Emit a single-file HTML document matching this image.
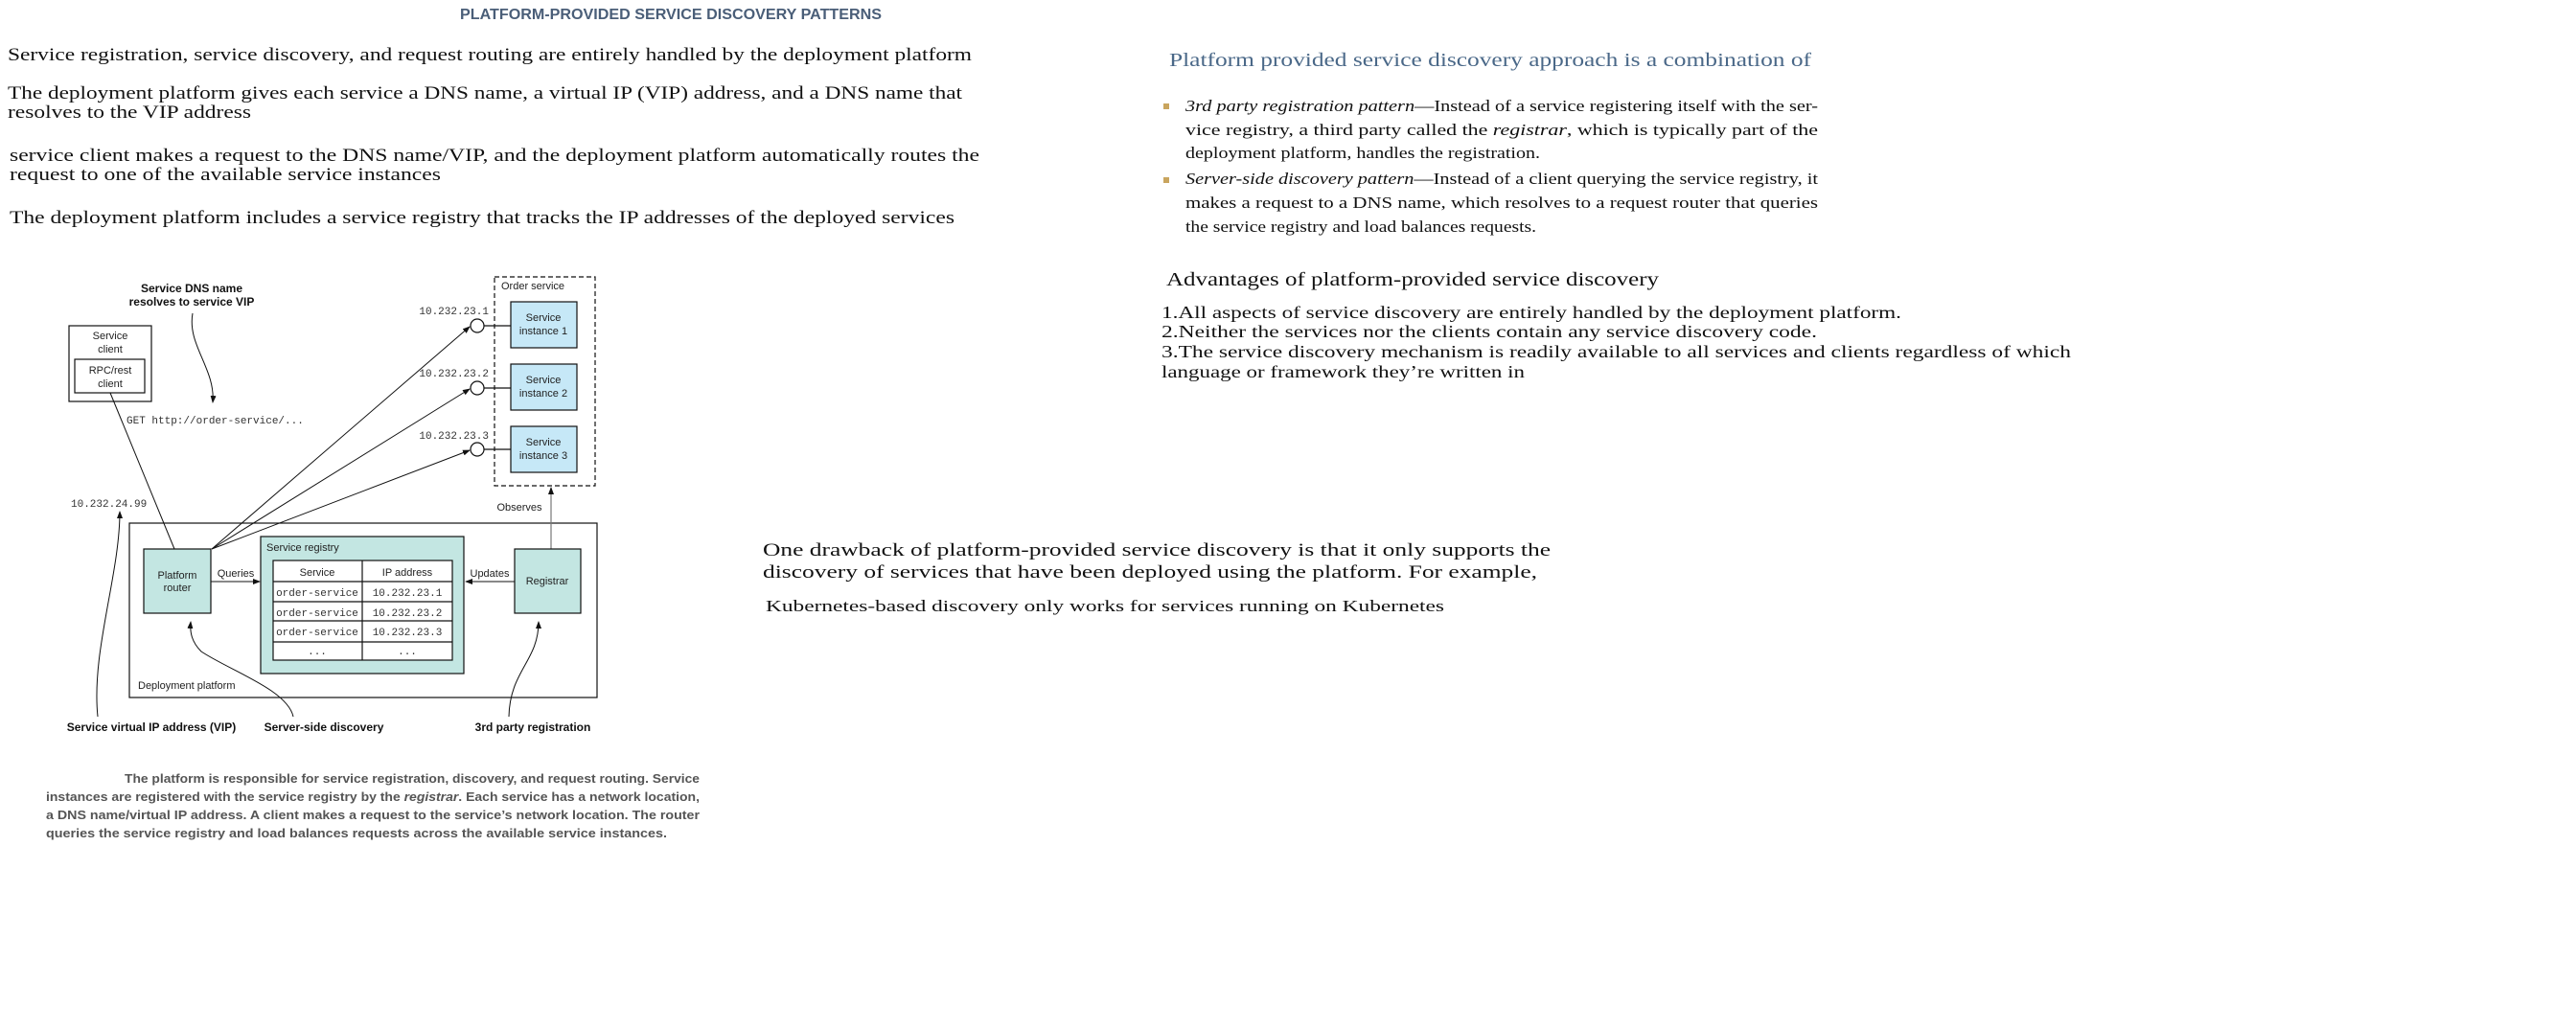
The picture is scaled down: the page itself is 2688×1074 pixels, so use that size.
<!DOCTYPE html>
<html><head><meta charset="utf-8"><style>
html,body{margin:0;padding:0;background:#fff;width:2688px;height:1074px;overflow:hidden}
svg{display:block}
.s{font-family:"Liberation Serif",serif;fill:#111}
.a{font-family:"Liberation Sans",sans-serif;fill:#222;font-size:11px}
.m{font-family:"Liberation Mono",monospace;fill:#333;font-size:11px}
.b{font-family:"Liberation Sans",sans-serif;font-weight:bold;fill:#111;font-size:12px}
</style></head><body>
<svg width="2688" height="1074" viewBox="0 0 2688 1074" xmlns="http://www.w3.org/2000/svg">
<defs><marker id="ar" markerWidth="8" markerHeight="6" refX="7" refY="3" orient="auto" markerUnits="userSpaceOnUse"><path d="M0,0 L8,3 L0,6 z" fill="#111"/></marker></defs>

<text x="480" y="20" font-family="Liberation Sans,sans-serif" font-weight="bold" font-size="16" fill="#4a5e78" textLength="440" lengthAdjust="spacingAndGlyphs">PLATFORM-PROVIDED SERVICE DISCOVERY PATTERNS</text>

<text class="s" x="8" y="63" font-size="19" textLength="1006" lengthAdjust="spacingAndGlyphs">Service registration, service discovery, and request routing are entirely handled by the deployment platform</text>
<text class="s" x="8" y="103" font-size="19" textLength="996" lengthAdjust="spacingAndGlyphs">The deployment platform gives each service a DNS name, a virtual IP (VIP) address, and a DNS name that</text>
<text class="s" x="8" y="123" font-size="19" textLength="254" lengthAdjust="spacingAndGlyphs">resolves to the VIP address</text>
<text class="s" x="10" y="168" font-size="19" textLength="1012" lengthAdjust="spacingAndGlyphs">service client makes a request to the DNS name/VIP, and the deployment platform automatically routes the</text>
<text class="s" x="10" y="188" font-size="19" textLength="450" lengthAdjust="spacingAndGlyphs">request to one of the available service instances</text>
<text class="s" x="10" y="233" font-size="19" textLength="986" lengthAdjust="spacingAndGlyphs">The deployment platform includes a service registry that tracks the IP addresses of the deployed services</text>

<!-- diagram -->
<text class="b" x="200" y="305" text-anchor="middle">Service DNS name</text>
<text class="b" x="200" y="319" text-anchor="middle">resolves to service VIP</text>
<path d="M201,327 C195,360 225,385 222,420" fill="none" stroke="#111" stroke-width="1" marker-end="url(#ar)"/>

<rect x="72" y="340" width="86" height="79" fill="#fff" stroke="#111" stroke-width="1.2"/>
<text class="a" x="115" y="354" text-anchor="middle">Service</text>
<text class="a" x="115" y="368" text-anchor="middle">client</text>
<rect x="78" y="375" width="73" height="35" fill="#fff" stroke="#111" stroke-width="1.2"/>
<text class="a" x="115" y="390" text-anchor="middle">RPC/rest</text>
<text class="a" x="115" y="404" text-anchor="middle">client</text>
<text class="m" x="132" y="442">GET http://order-service/...</text>

<text class="m" x="74" y="529">10.232.24.99</text>
<path d="M102,748 C95,680 125,600 125,534" fill="none" stroke="#111" stroke-width="1" marker-end="url(#ar)"/>

<rect x="516" y="289" width="105" height="218" fill="none" stroke="#111" stroke-width="1.2" stroke-dasharray="5,3"/>
<text class="a" x="523" y="302">Order service</text>
<g fill="#c6e8f7" stroke="#111" stroke-width="1.2">
<rect x="533" y="315" width="69" height="48"/>
<rect x="533" y="380" width="69" height="48"/>
<rect x="533" y="445" width="69" height="48"/>
</g>
<text class="a" x="567" y="335" text-anchor="middle">Service</text><text class="a" x="567" y="349" text-anchor="middle">instance 1</text>
<text class="a" x="567" y="400" text-anchor="middle">Service</text><text class="a" x="567" y="414" text-anchor="middle">instance 2</text>
<text class="a" x="567" y="465" text-anchor="middle">Service</text><text class="a" x="567" y="479" text-anchor="middle">instance 3</text>
<g stroke="#111" stroke-width="1.2" fill="#fff">
<line x1="505" y1="340" x2="533" y2="340"/><circle cx="498" cy="340" r="7"/>
<line x1="505" y1="405" x2="533" y2="405"/><circle cx="498" cy="405" r="7"/>
<line x1="505" y1="469" x2="533" y2="469"/><circle cx="498" cy="469" r="7"/>
</g>
<text class="m" x="510" y="328" text-anchor="end">10.232.23.1</text>
<text class="m" x="510" y="393" text-anchor="end">10.232.23.2</text>
<text class="m" x="510" y="458" text-anchor="end">10.232.23.3</text>

<rect x="135" y="546" width="488" height="182" fill="#fff" stroke="#111" stroke-width="1.2"/>
<line x1="575" y1="573" x2="575" y2="509" stroke="#777" stroke-width="1.2" marker-end="url(#ar)"/>
<text class="a" x="542" y="533" text-anchor="middle">Observes</text>
<g stroke="#111" stroke-width="1" fill="none">
<line x1="221" y1="573" x2="490" y2="341" marker-end="url(#ar)"/>
<line x1="221" y1="573" x2="490" y2="406" marker-end="url(#ar)"/>
<line x1="221" y1="573" x2="490" y2="470" marker-end="url(#ar)"/>
<line x1="115" y1="410" x2="182" y2="573"/>
</g>
<rect x="150" y="573" width="70" height="67" fill="#c3e6e2" stroke="#111" stroke-width="1.2"/>
<text class="a" x="185" y="604" text-anchor="middle">Platform</text>
<text class="a" x="185" y="617" text-anchor="middle">router</text>
<rect x="272" y="560" width="212" height="143" fill="#c3e6e2" stroke="#111" stroke-width="1.2"/>
<text class="a" x="278" y="575">Service registry</text>
<rect x="285" y="585" width="187" height="104" fill="#fff" stroke="#111" stroke-width="1.2"/>
<g stroke="#111" stroke-width="1.2">
<line x1="378" y1="585" x2="378" y2="689"/>
<line x1="285" y1="607" x2="472" y2="607"/>
<line x1="285" y1="628" x2="472" y2="628"/>
<line x1="285" y1="648" x2="472" y2="648"/>
<line x1="285" y1="670" x2="472" y2="670"/>
</g>
<text class="a" x="331" y="601" text-anchor="middle">Service</text>
<text class="a" x="425" y="601" text-anchor="middle">IP address</text>
<text class="m" x="331" y="622" text-anchor="middle">order-service</text><text class="m" x="425" y="622" text-anchor="middle">10.232.23.1</text>
<text class="m" x="331" y="643" text-anchor="middle">order-service</text><text class="m" x="425" y="643" text-anchor="middle">10.232.23.2</text>
<text class="m" x="331" y="663" text-anchor="middle">order-service</text><text class="m" x="425" y="663" text-anchor="middle">10.232.23.3</text>
<text class="m" x="331" y="683" text-anchor="middle">...</text><text class="m" x="425" y="683" text-anchor="middle">...</text>
<line x1="220" y1="607" x2="271" y2="607" stroke="#111" stroke-width="1" marker-end="url(#ar)"/>
<text class="a" x="246" y="602" text-anchor="middle">Queries</text>
<rect x="537" y="573" width="69" height="67" fill="#c3e6e2" stroke="#111" stroke-width="1.2"/>
<text class="a" x="571" y="610" text-anchor="middle">Registrar</text>
<line x1="537" y1="607" x2="486" y2="607" stroke="#111" stroke-width="1" marker-end="url(#ar)"/>
<text class="a" x="511" y="602" text-anchor="middle">Updates</text>
<text class="a" x="144" y="719">Deployment platform</text>

<path d="M306,748 C300,720 240,700 210,680 C200,670 198,660 199,649" fill="none" stroke="#111" stroke-width="1" marker-end="url(#ar)"/>
<path d="M531,748 C532,700 562,690 562,649" fill="none" stroke="#111" stroke-width="1" marker-end="url(#ar)"/>
<text class="b" x="158" y="763" text-anchor="middle">Service virtual IP address (VIP)</text>
<text class="b" x="338" y="763" text-anchor="middle">Server-side discovery</text>
<text class="b" x="556" y="763" text-anchor="middle">3rd party registration</text>

<g font-family="Liberation Sans,sans-serif" font-weight="bold" font-size="13" fill="#555">
<text x="130" y="817" textLength="600" lengthAdjust="spacingAndGlyphs">The platform is responsible for service registration, discovery, and request routing. Service</text>
<text x="48" y="836" textLength="682" lengthAdjust="spacingAndGlyphs">instances are registered with the service registry by the <tspan font-style="italic">registrar</tspan>. Each service has a network location,</text>
<text x="48" y="855" textLength="682" lengthAdjust="spacingAndGlyphs">a DNS name/virtual IP address. A client makes a request to the service’s network location. The router</text>
<text x="48" y="874" textLength="648" lengthAdjust="spacingAndGlyphs">queries the service registry and load balances requests across the available service instances.</text>
</g>

<!-- right -->
<text x="1220" y="69" font-family="Liberation Serif,serif" font-size="20" fill="#4a6888" textLength="670" lengthAdjust="spacingAndGlyphs">Platform provided service discovery approach is a combination of</text>
<rect x="1214" y="108" width="6" height="6" fill="#c9a55e"/>
<rect x="1214" y="185" width="6" height="6" fill="#c9a55e"/>
<text class="s" x="1237" y="116" font-size="16.5" textLength="660" lengthAdjust="spacingAndGlyphs"><tspan font-style="italic">3rd party registration pattern</tspan>—Instead of a service registering itself with the ser-</text>
<text class="s" x="1237" y="141" font-size="16.5" textLength="660" lengthAdjust="spacingAndGlyphs">vice registry, a third party called the <tspan font-style="italic">registrar</tspan>, which is typically part of the</text>
<text class="s" x="1237" y="165" font-size="16.5" textLength="370" lengthAdjust="spacingAndGlyphs">deployment platform, handles the registration.</text>
<text class="s" x="1237" y="192" font-size="16.5" textLength="660" lengthAdjust="spacingAndGlyphs"><tspan font-style="italic">Server-side discovery pattern</tspan>—Instead of a client querying the service registry, it</text>
<text class="s" x="1237" y="217" font-size="16.5" textLength="660" lengthAdjust="spacingAndGlyphs">makes a request to a DNS name, which resolves to a request router that queries</text>
<text class="s" x="1237" y="242" font-size="16.5" textLength="366" lengthAdjust="spacingAndGlyphs">the service registry and load balances requests.</text>
<text class="s" x="1217" y="298" font-size="20" textLength="514" lengthAdjust="spacingAndGlyphs">Advantages of platform-provided service discovery</text>
<text class="s" x="1212" y="332" font-size="18" textLength="772" lengthAdjust="spacingAndGlyphs">1.All aspects of service discovery are entirely handled by the deployment platform.</text>
<text class="s" x="1212" y="352" font-size="18" textLength="684" lengthAdjust="spacingAndGlyphs">2.Neither the services nor the clients contain any service discovery code.</text>
<text class="s" x="1212" y="373" font-size="18" textLength="949" lengthAdjust="spacingAndGlyphs">3.The service discovery mechanism is readily available to all services and clients regardless of which</text>
<text class="s" x="1212" y="394" font-size="18" textLength="379" lengthAdjust="spacingAndGlyphs">language or framework they’re written in</text>

<text class="s" x="796" y="580" font-size="19" textLength="822" lengthAdjust="spacingAndGlyphs">One drawback of platform-provided service discovery is that it only supports the</text>
<text class="s" x="796" y="603" font-size="19" textLength="808" lengthAdjust="spacingAndGlyphs">discovery of services that have been deployed using the platform. For example,</text>
<text class="s" x="799" y="638" font-size="17" textLength="708" lengthAdjust="spacingAndGlyphs">Kubernetes-based discovery only works for services running on Kubernetes</text>
</svg>
</body></html>
